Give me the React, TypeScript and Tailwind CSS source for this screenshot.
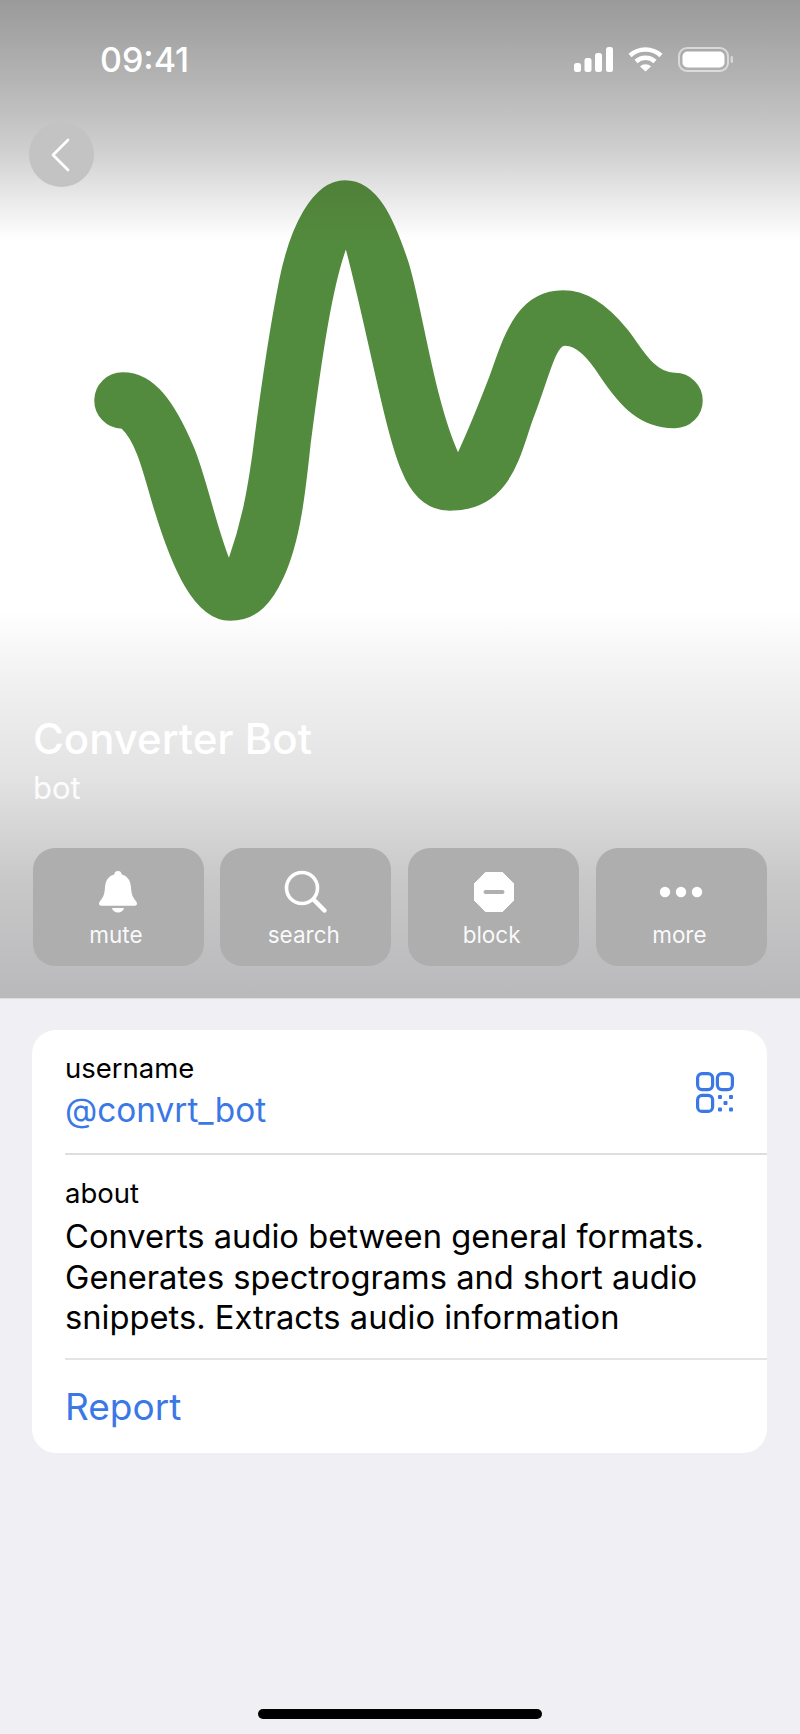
const waveD =
  "M122 428A27.500 27.500 0 0 1 123 373" +
  "C155 373 175 405 193 447C205 475 215 525 229 560" +
  "C243 520 248 490 253 455C260 400 270 330 280 280C290 230 312 181 345 181" +
  "C378 181 394 222 407 260C420 298 433 400 458 454" +
  "C470 428 480 403 490 377C503 342 515 291 563 291" +
  "C585 291 605 303 627 330C640 346 653 374 675 373.500" +
  "A27 27 0 0 1 675 427.500" +
  "C640 428 620 405 600 375C588 357 577 345 565 345" +
  "C555 345 549 375 533 417C520 451 512 510 450 510" +
  "C428 510 412 495 402 470C385 430 368 330 346 247" +
  "C332 285 322 350 310 443C305 490 300 540 283 577" +
  "C272 601 258 620 230 620C195 620 172 570 150 493" +
  "C142 465 135 440 122 428Z";

function Bell() {
  return (
    <svg width="38" height="42" viewBox="0 0 38 42" fill="#fff">
      <path d="M19 0c2.400 0 3.600 1.600 3.800 3.600C29 5.300 31.600 10.400 32 16.500c.4 6.500 1.600 9.500 4.700 13.300 1 1.300 1.300 2.200 1.300 3 0 1.200-.9 2-2.300 2H2.300C.9 34.800 0 34 0 32.800c0-.8.300-1.700 1.300-3C4.400 26 5.600 23 6 16.500 6.400 10.400 9 5.300 15.200 3.600 15.400 1.600 16.600 0 19 0Z" />
      <path d="M13 37h12c-.6 2.800-3 4.500-6 4.500S13.600 39.800 13 37Z" />
    </svg>
  );
}

function Search() {
  return (
    <svg width="44" height="44" viewBox="0 0 44 44" fill="none" stroke="#fff" strokeWidth="3.600" strokeLinecap="round">
      <circle cx="18" cy="18" r="15.500" />
      <path d="M30 30 40.500 40.500" strokeWidth="4.500" />
    </svg>
  );
}

function Block() {
  return (
    <svg width="40" height="40" viewBox="0 0 40 40">
      <path d="M12 0h16l12 12v16L28 40H12L0 28V12Z" fill="#fff" stroke="#fff" strokeLinejoin="round" />
      <rect x="9.500" y="18" width="21" height="4" rx="2" fill="#b0b0b1" />
    </svg>
  );
}

function More() {
  return (
    <svg width="44" height="12" viewBox="0 0 44 12" fill="#fff">
      <circle cx="6" cy="6" r="5.200" />
      <circle cx="22" cy="6" r="5.200" />
      <circle cx="38" cy="6" r="5.200" />
    </svg>
  );
}

function Action({ icon, label }: { icon: React.ReactNode; label: string }) {
  return (
    <div className="flex h-[118px] w-[171px] flex-col items-center rounded-[22px] bg-[#aeaeaf]">
      <div className="mt-[22px] flex h-[43px] items-center justify-center">{icon}</div>
      <div className="mt-[8px] pr-[4px] text-[22.5px] leading-[28px] text-white/95">{label}</div>
    </div>
  );
}

function StatusIcons() {
  return (
    <div className="flex items-center">
      <svg width="39" height="25" viewBox="0 0 39 25" fill="#fff">
        <rect x="0" y="16" width="7" height="9" rx="2.500" />
        <rect x="10.500" y="11" width="7" height="14" rx="2.500" />
        <rect x="21" y="6" width="7" height="19" rx="2.500" />
        <rect x="32" y="0" width="7" height="25" rx="2.500" />
      </svg>
      <svg className="ml-[15px]" width="35" height="25" viewBox="0 0 35 25" fill="none" stroke="#fff" strokeWidth="4.500">
        <path d="M2 8.500C11 0.500 24 0.500 33 8.500" />
        <path d="M8 14.500C13.500 9.500 21.500 9.500 27 14.500" />
        <path d="M12 19.500 17.500 24.500 23 19.500C20 16.500 15 16.500 12 19.500Z" fill="#fff" stroke="none" />
      </svg>
      <svg className="ml-[15px]" width="55" height="25" viewBox="0 0 55 25" fill="none">
        <rect x="1" y="1" width="49" height="23" rx="8" stroke="#fff" strokeOpacity="0.55" strokeWidth="2" />
        <rect x="4.500" y="4.500" width="42" height="16" rx="5" fill="#fff" />
        <rect x="52.500" y="9" width="2.500" height="7" rx="1.200" fill="#fff" fillOpacity="0.5" />
      </svg>
    </div>
  );
}

function QrIcon() {
  return (
    <svg width="38" height="41" viewBox="0 0 38 41" fill="none" stroke="#3a78e6" strokeWidth="3.200">
      <rect x="1.600" y="1.600" width="15" height="16" rx="4.500" />
      <rect x="21.400" y="1.600" width="15" height="16" rx="4.500" />
      <rect x="1.600" y="23.400" width="15" height="16" rx="4.500" />
      <g fill="#3a78e6" stroke="none">
        <rect x="22" y="23" width="4" height="4" rx="1" />
        <rect x="33" y="23" width="4" height="4" rx="1" />
        <rect x="27.500" y="29" width="4" height="4" rx="1" />
        <rect x="22" y="35.500" width="4" height="4" rx="1" />
        <rect x="33" y="35.500" width="4" height="4" rx="1" />
      </g>
    </svg>
  );
}

export default function App() {
  return (
    <div
      className="flex h-[1734px] w-[800px] flex-col bg-[#efeff4] text-black"
      style={{ fontFamily: "Inter, 'Liberation Sans', sans-serif" }}
    >
      <header className="flex h-[999px] flex-col border-b border-[#dcdce0] bg-[linear-gradient(180deg,#9a9a9a_0px,#b4b4b4_80px,#cfcfcf_150px,#f2f2f2_215px,#ffffff_240px,#ffffff_610px,#f1f1f2_680px,#e2e2e3_780px,#c8c8c9_880px,#b9b9bb_999px)]">
        <div className="flex h-[122px] items-start justify-between pl-[100px] pr-[67px] pt-[47px]">
          <div className="text-[34px] font-medium leading-[25px] text-white">09:41</div>
          <StatusIcons />
        </div>
        <div className="ml-[29px] flex h-[65px] w-[65px] items-center justify-center rounded-full bg-[#c3c3c3]">
          <svg className="mr-[2px]" width="22" height="36" viewBox="0 0 22 36" fill="none" stroke="#fff" strokeWidth="2.800" strokeLinecap="round" strokeLinejoin="round">
            <path d="M18 3 3 18 18 33" />
          </svg>
        </div>
        <svg className="-mt-[7px] block overflow-visible" width="800" height="450" viewBox="0 180 800 450">
          <defs>
            <linearGradient id="waveFill" gradientUnits="userSpaceOnUse" x1="0" y1="180" x2="0" y2="245">
              <stop offset="0" stopColor="#4f8138" />
              <stop offset="1" stopColor="#538b3e" />
            </linearGradient>
          </defs>
          <path d={waveD} fill="url(#waveFill)" stroke="url(#waveFill)" strokeWidth="1.500" strokeLinejoin="round" />
        </svg>
        <div className="mt-[86px] pl-[33px] text-[42px] font-medium leading-[46px] text-white">Converter Bot</div>
        <div className="mt-[8px] pl-[33px] text-[31px] leading-[36px] text-white/90">bot</div>
        <div className="mt-[42px] flex gap-[16.8px] pl-[32.5px]">
          <Action icon={<Bell />} label="mute" />
          <Action icon={<Search />} label="search" />
          <Action icon={<Block />} label="block" />
          <Action icon={<More />} label="more" />
        </div>
      </header>

      <section className="ml-[32px] mr-[33px] mt-[31px] h-[423px] rounded-[24px] bg-white">
        <div className="ml-[33px] flex h-[125px] items-start justify-between border-b-2 border-[#dedee0] pr-[33px]">
          <div>
            <div className="mt-[22px] text-[27.5px] leading-[32px]">username</div>
            <div className="mt-[6px] text-[33.4px] leading-[40px] text-[#3a78e6]">@convrt_bot</div>
          </div>
          <div className="mt-[42px]"><QrIcon /></div>
        </div>
        <div className="ml-[33px] h-[205px] border-b-2 border-[#e4e4e6] pt-[22px]">
          <div className="text-[27.5px] leading-[32px]">about</div>
          <div className="mt-[7px] text-[32.7px] leading-[40.5px]">
            Converts audio between general formats.
            <br />
            Generates spectrograms and short audio
            <br />
            snippets. Extracts audio information
          </div>
        </div>
        <div className="ml-[33px] mt-[25px] text-[37px] leading-[44px] text-[#3a78e6]">Report</div>
      </section>

      <div className="mx-auto mb-[15px] mt-auto h-[10px] w-[284px] rounded-full bg-black" />
    </div>
  );
}
